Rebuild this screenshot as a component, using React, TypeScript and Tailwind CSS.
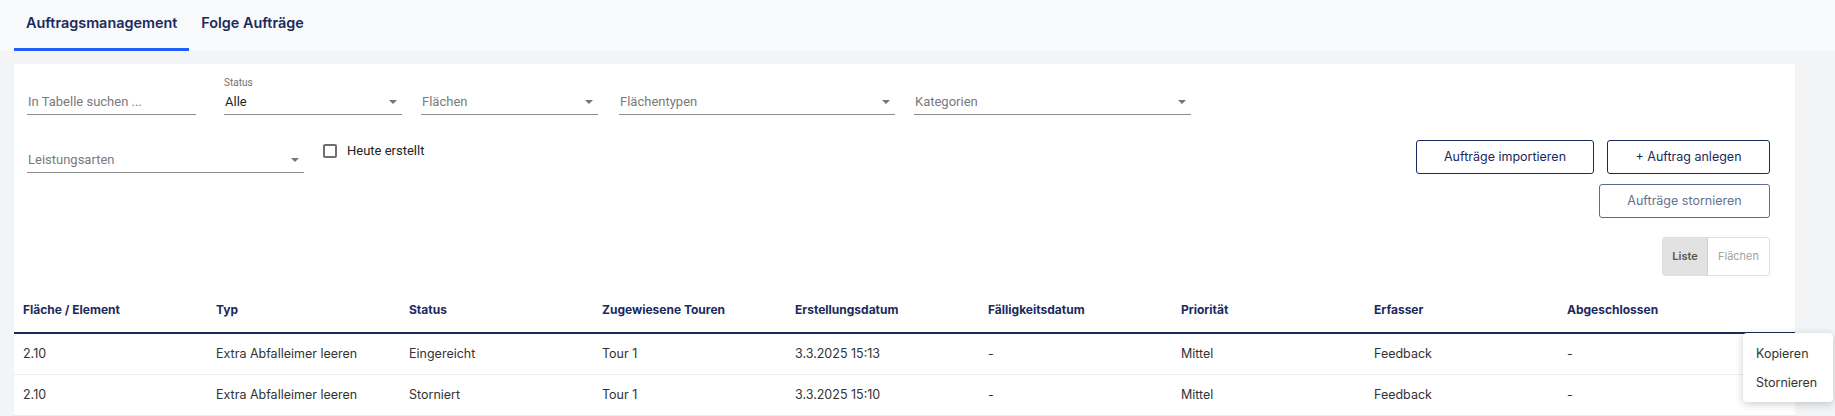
import React from 'react';

const navy = 'text-[#1b2a5c]';

function Arrow() {
    return (
        <svg width="8" height="4" viewBox="0 0 8 4" className="shrink-0">
            <polygon points="0,0 8,0 4,4" fill="#757575" />
        </svg>
    );
}

interface FieldProps {
    label?: string;
    value?: string;
    placeholder?: string;
    select?: boolean;
    className?: string;
}

function Field({ label, value, placeholder, select = true, className = '' }: FieldProps) {
    return (
        <div className={`flex flex-col font-['Roboto',sans-serif] ${className}`}>
            {label !== undefined && (
                <div className="h-[14px] text-[10px] leading-[14px] text-[#6f6f6f]">{label}</div>
            )}
            <div className="flex h-[25px] items-center justify-between border-b border-[#8c8c8c] pl-px pr-[5px] text-[13px]">
                <span className={value ? 'text-[#1f1f1f]' : 'text-[#7a7a7a]'}>{value ?? placeholder}</span>
                {select && <Arrow />}
            </div>
        </div>
    );
}

const columns = [
    'Fläche / Element',
    'Typ',
    'Status',
    'Zugewiesene Touren',
    'Erstellungsdatum',
    'Fälligkeitsdatum',
    'Priorität',
    'Erfasser',
    'Abgeschlossen',
];

const rows = [
    ['2.10', 'Extra Abfalleimer leeren', 'Eingereicht', 'Tour 1', '3.3.2025 15:13', '-', 'Mittel', 'Feedback', '-'],
    ['2.10', 'Extra Abfalleimer leeren', 'Storniert', 'Tour 1', '3.3.2025 15:10', '-', 'Mittel', 'Feedback', '-'],
];

export default function App() {
    return (
        <div className="relative min-h-screen bg-[#f3f4f6] font-['Inter',sans-serif]">
            {/* tabs */}
            <div className="flex h-[51px] bg-[#f8f9fb] pl-[14px]">
                <div className={`flex h-[51px] items-center border-b-[3px] border-[#1f5eff] px-[12px] pb-[3px] text-[14.4px] font-semibold ${navy}`}>
                    Auftragsmanagement
                </div>
                <div className={`flex h-[51px] items-center px-[12px] pb-[6px] text-[14.4px] font-semibold ${navy}`}>
                    Folge Aufträge
                </div>
            </div>

            {/* card */}
            <div className="ml-[14px] mr-[40px] mt-[13px] bg-white">
                <div className="pl-[13px] pr-[25px] pt-[12px]">
                    <div className="flex items-end">
                        <Field placeholder="In Tabelle suchen ..." select={false} className="w-[169px]" />
                        <Field label="Status" value="Alle" className="ml-[28px] w-[178px]" />
                        <Field placeholder="Flächen" className="ml-[19px] w-[177px]" />
                        <Field placeholder="Flächentypen" className="ml-[21px] w-[276px]" />
                        <Field placeholder="Kategorien" className="ml-[19px] w-[277px]" />
                    </div>

                    <div className="mt-[25px] flex items-start justify-between">
                        <div className="flex items-start">
                            <Field placeholder="Leistungsarten" className="mt-[8px] w-[277px]" />
                            <label className="ml-[19px] mt-[4px] flex h-[14px] items-center gap-[10px] font-['Roboto',sans-serif] text-[13px] text-[#222]">
                                <span className="h-[14px] w-[14px] rounded-[2px] border-2 border-[#6e6e6e]" />
                                Heute erstellt
                            </label>
                        </div>

                        <div className="flex flex-col items-end gap-[10px]">
                            <div className="flex gap-[13px]">
                                <button className={`h-[34px] w-[178px] rounded-[3px] border border-[#1b2a5c] bg-white text-[12.5px] ${navy}`}>
                                    Aufträge importieren
                                </button>
                                <button className={`h-[34px] w-[163px] rounded-[3px] border border-[#1b2a5c] bg-white text-[12.5px] ${navy}`}>
                                    + Auftrag anlegen
                                </button>
                            </div>
                            <button className="h-[34px] w-[171px] rounded-[3px] border border-[#5d6a92] bg-white text-[12.5px] text-[#66708f]">
                                Aufträge stornieren
                            </button>
                            <div className="mt-[9px] flex h-[39px] overflow-hidden rounded-[3px] border border-[#dedede] text-[11px]">
                                <div className="flex w-[45px] items-center justify-center border-r border-[#cfcfcf] bg-[#e2e2e2] font-semibold text-[#555]">
                                    Liste
                                </div>
                                <div className="flex w-[61px] items-center justify-center bg-white text-[#a3a3a3]">
                                    Flächen
                                </div>
                            </div>
                        </div>
                    </div>
                </div>

                {/* table */}
                <div className="mt-[12px]">
                    <div className="grid h-[46px] grid-cols-[repeat(9,193px)_1fr] items-center border-b-2 border-[#1b2a5c]">
                        {columns.map((c) => (
                            <div key={c} className={`pl-[9px] text-[12px] font-bold ${navy}`}>
                                {c}
                            </div>
                        ))}
                        <div />
                    </div>
                    {rows.map((r, i) => (
                        <div
                            key={i}
                            className="grid h-[41px] grid-cols-[repeat(9,193px)_1fr] items-center border-b border-[#ececec]"
                        >
                            {r.map((v, j) => (
                                <div key={j} className="pl-[9px] text-[12.5px] text-[#333]">
                                    {v}
                                </div>
                            ))}
                            <div />
                        </div>
                    ))}
                </div>
            </div>

            {/* row action menu */}
            <div className="absolute left-[1743px] top-[333px] flex w-[90px] flex-col rounded-[4px] bg-white pb-[4px] pt-[7px] text-[12.5px] text-[#333] shadow-[0_2px_8px_rgba(0,0,0,0.2)]">
                <div className="flex h-[29px] items-center pl-[13px]">Kopieren</div>
                <div className="flex h-[29px] items-center pl-[13px]">Stornieren</div>
            </div>
        </div>
    );
}
